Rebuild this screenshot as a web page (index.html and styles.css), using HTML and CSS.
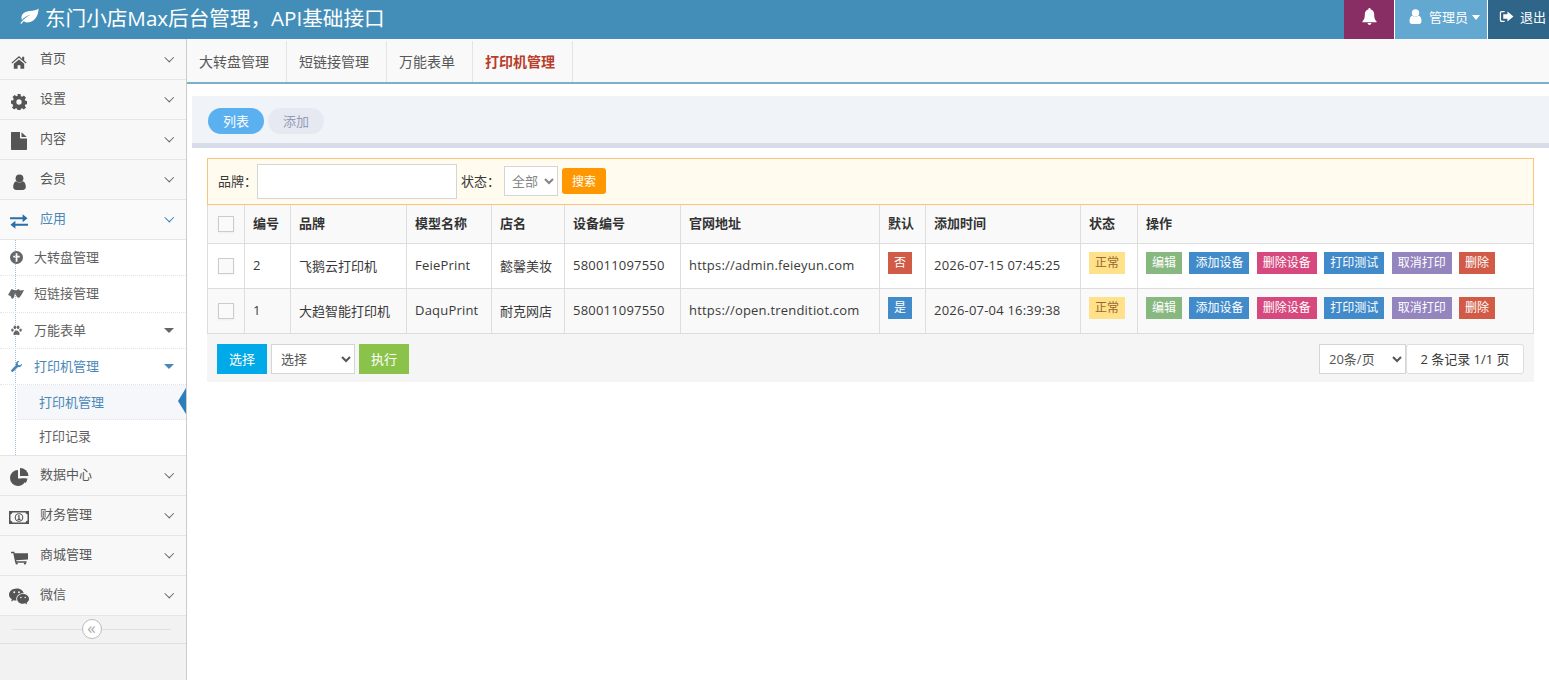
FILE: index.html
```html
<!DOCTYPE html>
<html>
<head>
    <meta charset="utf-8">
    <title>东门小店Max后台管理</title>
    <link rel="stylesheet" href="styles.css">
</head>

<body>
    <div class="navbar">
        <div class="brand">
            <svg class="brand-leaf" viewBox="0 0 24 20"><path d="M23.500 .5C21 3 17 3 13 3.500 7 4 3 7 3 11.500c0 1 .2 2 .6 2.800C6 11 9.500 9 14 8c-4 2-8 4.500-12 9.500-.6.800.6 1.700 1.300.9.700-.9 1.500-1.800 2.300-2.600 1.600 1 3.200 1.400 5 1.400C18 16.800 23.500 10 23.500 .5z"/></svg>
            <span>东门小店Max后台管理，API基础接口</span>
        </div>
        <div class="nav-right">
            <div class="nav-cell nav-bell">
                <svg class="nav-ico" viewBox="0 0 16 18"><path d="M8 0c-.7 0-1.200.5-1.200 1.200v.3C4.300 2 3 4 3 6.500 3 11 2 12.500.5 14v1h15v-1C14 12.500 13 11 13 6.500c0-2.500-1.300-4.500-3.800-5v-.3C9.200.5 8.700 0 8 0zM6 16c0 1.100.9 2 2 2s2-.9 2-2z"/></svg>
            </div>
            <div class="nav-cell nav-user">
                <svg class="nav-ico nav-ico-user" viewBox="0 0 14 17"><circle cx="7" cy="4.500" r="4.200"/><path d="M.2 14c0-4 1.500-6 3.300-6.300C4.500 8.600 5.700 9 7 9s2.500-.4 3.500-1.300C12.300 8 13.800 10 13.800 14c0 1.800-1.200 3-2.800 3H3c-1.600 0-2.800-1.200-2.800-3z"/></svg>
                <span>管理员</span>
                <i class="caret-white"></i>
            </div>
            <div class="nav-cell nav-exit">
                <svg class="nav-ico nav-ico-exit" viewBox="0 0 16 14"><path d="M6 1H3C1.500 1 .8 2 .8 3.200v7.600C.8 12 1.500 13 3 13h3v-1.400H3c-.5 0-.9-.4-.9-.9V3.300c0-.5.4-.9.9-.9h3z"/><path d="M9 1.500 15.500 7 9 12.500V9.500H4.500v-5H9z"/></svg>
                <span>退出</span>
            </div>
        </div>
    </div>

    <div class="layout">
        <div class="sidebar">
            <ul class="menu">
                <li class="menu-item">
                    <span class="menu-box"><svg class="menu-ico ico-home" viewBox="0 0 20 17"><path d="M10 1 .5 9.300l1 1.100L10 3.200l8.500 7.200 1-1.100-3-2.600V2h-2.600v2.600zM3.500 10.800V17h4.700v-4.500h3.600V17h4.700v-6.200L10 5.300z"/></svg></span>
                    <span class="menu-txt">首页</span><i class="chev"></i>
                </li>
                <li class="menu-item">
                    <span class="menu-box"><svg class="menu-ico ico-gear" viewBox="0 0 18 18"><path fill-rule="evenodd" d="M7.300 0h3.400l.4 2.500 1.400.6 2-1.400 2.400 2.400-1.400 2 .6 1.400 2.500.4v3.400l-2.500.4-.6 1.400 1.400 2-2.400 2.400-2-1.400-1.400.6-.4 2.500H7.300l-.4-2.500-1.400-.6-2 1.400-2.400-2.400 1.400-2-.6-1.400L0 10.700V7.300l2.500-.4.6-1.400-1.400-2 2.400-2.400 2 1.400 1.400-.6zM9 6a3 3 0 1 0 0 6 3 3 0 0 0 0-6z"/></svg></span>
                    <span class="menu-txt">设置</span><i class="chev"></i>
                </li>
                <li class="menu-item">
                    <span class="menu-box"><svg class="menu-ico ico-file" viewBox="0 0 16 18"><path d="M0 1c0-.6.4-1 1-1h8v5.500c0 .6.400 1 1 1h6V17c0 .6-.4 1-1 1H1c-.6 0-1-.4-1-1z"/><path d="M10.500.3 15.700 5H10.500z"/></svg></span>
                    <span class="menu-txt">内容</span><i class="chev"></i>
                </li>
                <li class="menu-item">
                    <span class="menu-box"><svg class="menu-ico ico-user" viewBox="0 0 14 17"><circle cx="7" cy="4.500" r="4.200"/><path d="M.2 14c0-4 1.500-6 3.300-6.300C4.500 8.600 5.700 9 7 9s2.500-.4 3.500-1.300C12.300 8 13.800 10 13.800 14c0 1.800-1.200 3-2.800 3H3c-1.600 0-2.800-1.200-2.800-3z"/></svg></span>
                    <span class="menu-txt">会员</span><i class="chev"></i>
                </li>
                <li class="menu-item is-open">
                    <span class="menu-box"><svg class="menu-ico ico-swap" viewBox="0 0 20 16"><path d="M0 3.400h14V0l5.500 4.400L14 8.800V5.600H0z"/><path d="M20 12.600H6V16L.5 11.600 6 7.200v3.200h14z"/></svg></span>
                    <span class="menu-txt">应用</span><i class="chev"></i>
                </li>
                <li class="sub-menu">
                    <ul>
                        <li class="sub-item">
                            <span class="sub-box"><svg class="sub-ico" viewBox="0 0 14 14"><path fill-rule="evenodd" d="M7 0a7 7 0 1 0 0 14A7 7 0 0 0 7 0zM6 2.500h2V5h2.500v2H8v4.500H6V7H3.500V5H6z"/></svg></span>
                            <span class="sub-txt">大转盘管理</span>
                        </li>
                        <li class="sub-item">
                            <span class="sub-box"><svg class="sub-ico sub-ico-wide" viewBox="0 0 16 12"><path d="M3.500 1 6 2 8 2.500 10.500 1l1.500 1.500 4-.5-1.500 3-1.500 2.500-2 2.500-2-1L7 5 6 9.500 4 11 2.500 8 0 7z"/></svg></span>
                            <span class="sub-txt">短链接管理</span>
                        </li>
                        <li class="sub-item">
                            <span class="sub-box"><svg class="sub-ico sub-ico-sm" viewBox="0 0 14 13"><ellipse cx="1.800" cy="6" rx="1.600" ry="2"/><ellipse cx="5" cy="2.500" rx="1.700" ry="2.300"/><ellipse cx="9" cy="2.500" rx="1.700" ry="2.300"/><ellipse cx="12.200" cy="6" rx="1.600" ry="2"/><path d="M7 6.500c-2 0-4 2.500-4 4.500 0 1.500 1.500 1.500 2.200 1.300.6-.2 1.200-.4 1.800-.4s1.200.2 1.800.4c.7.200 2.200.2 2.200-1.300 0-2-2-4.500-4-4.500z"/></svg></span>
                            <span class="sub-txt">万能表单</span><i class="tri"></i>
                        </li>
                        <li class="sub-item is-open">
                            <span class="sub-box"><svg class="sub-ico sub-ico-sm" viewBox="0 0 14 14"><path d="M13.800 3.300c.3 1.500-.2 3-1.300 3.800-1 .8-2.300 1-3.500.6L3 13.500c-.7.700-1.700.7-2.400 0-.7-.7-.7-1.700 0-2.400L6.300 5c-.4-1.200-.2-2.500.6-3.500C7.700.4 9.200-.1 10.700.2L8.500 2.400l.5 2.600 2.600.5z"/></svg></span>
                            <span class="sub-txt">打印机管理</span><i class="tri"></i>
                        </li>
                        <li class="leaf is-active">打印机管理</li>
                        <li class="leaf">打印记录</li>
                    </ul>
                </li>
                <li class="menu-item">
                    <span class="menu-box"><svg class="menu-ico ico-pie" viewBox="0 0 19 18"><path d="M8 2a8 8 0 1 0 8 8.500H8z"/><path d="M10 0v8h8.500A8.500 8.500 0 0 0 10 0z"/><path d="M11 10.500h6.500a8 8 0 0 1-2.200 4.700z"/></svg></span>
                    <span class="menu-txt">数据中心</span><i class="chev"></i>
                </li>
                <li class="menu-item">
                    <span class="menu-box"><svg class="menu-ico ico-money" viewBox="0 0 20 13"><path d="M0 0h20v13H0z"/><path class="money-hole" d="M1.500 3.500A2.500 2.500 0 0 0 3.500 1.500h13a2.500 2.500 0 0 0 2 2v6a2.500 2.500 0 0 0-2 2h-13a2.500 2.500 0 0 0-2-2z"/><circle cx="10" cy="6.500" r="4.300"/><circle class="money-hole" cx="10" cy="6.500" r="3.200"/><path d="M9.300 4.300h1.300v3.500h.9V9H8.500V7.800h.9V5.500h-.9z"/></svg></span>
                    <span class="menu-txt">财务管理</span><i class="chev"></i>
                </li>
                <li class="menu-item">
                    <span class="menu-box"><svg class="menu-ico ico-cart" viewBox="0 0 18 14"><path d="M0 .5h3.500l.5 1.500H18v6.500L5.500 9.500l.3 1H16.500V12H4.500L2.400 2H0z"/><circle cx="6" cy="12.800" r="1.200"/><circle cx="14.800" cy="12.800" r="1.200"/></svg></span>
                    <span class="menu-txt">商城管理</span><i class="chev"></i>
                </li>
                <li class="menu-item">
                    <span class="menu-box"><svg class="menu-ico ico-chat" viewBox="0 0 21 17"><path d="M8 0C3.600 0 0 2.900 0 6.500 0 8.600 1.100 10.300 3 11.500l-.8 2.300 2.700-1.400c1 .3 2 .5 3 .4-.2-.6-.3-1.200-.3-1.800C7.600 7.500 10.800 5 14.800 5h.7C14.700 2.100 11.700 0 8 0z"/><path d="M14.700 6C11.300 6 8.500 8.200 8.500 11s2.800 5 6.200 5c.8 0 1.500-.1 2.200-.3l2.200 1.200-.6-1.900c1.500-1 2.500-2.400 2.500-4 0-2.800-2.900-5-6.300-5z"/><circle class="money-hole" cx="5.500" cy="4" r="1"/><circle class="money-hole" cx="10.500" cy="4" r="1"/><circle class="money-hole" cx="12.500" cy="9.500" r=".8"/><circle class="money-hole" cx="17" cy="9.500" r=".8"/></svg></span>
                    <span class="menu-txt">微信</span><i class="chev"></i>
                </li>
            </ul>
            <div class="collapse-bar">
                <span class="collapse-btn">«</span>
            </div>
        </div>

        <div class="main">
            <div class="tabs">
                <a class="tab">大转盘管理</a>
                <a class="tab">短链接管理</a>
                <a class="tab">万能表单</a>
                <a class="tab tab-on">打印机管理</a>
            </div>

            <div class="page-head">
                <a class="pill pill-on">列表</a>
                <a class="pill">添加</a>
            </div>

            <div class="panel">
                <div class="search-box">
                    <label>品牌：</label>
                    <input class="txt" type="text">
                    <label class="lbl-state">状态：</label>
                    <select class="sel-state"><option>全部</option></select>
                    <button class="btn-search">搜索</button>
                </div>

                <table class="grid">
                    <colgroup>
                        <col class="c1"><col class="c2"><col class="c3"><col class="c4"><col class="c5"><col class="c6"><col class="c7"><col class="c8"><col class="c9"><col class="c10"><col>
                    </colgroup>
                    <thead>
                        <tr>
                            <th><span class="check"></span></th>
                            <th>编号</th>
                            <th>品牌</th>
                            <th>模型名称</th>
                            <th>店名</th>
                            <th>设备编号</th>
                            <th>官网地址</th>
                            <th>默认</th>
                            <th>添加时间</th>
                            <th>状态</th>
                            <th>操作</th>
                        </tr>
                    </thead>
                    <tbody>
                        <tr>
                            <td><span class="check"></span></td>
                            <td class="latin">2</td>
                            <td>飞鹅云打印机</td>
                            <td class="latin">FeiePrint</td>
                            <td>懿馨美妆</td>
                            <td class="latin">580011097550</td>
                            <td class="latin">https://admin.feieyun.com</td>
                            <td><span class="tag red">否</span></td>
                            <td class="latin">2026-07-15 07:45:25</td>
                            <td><span class="tag warn">正常</span></td>
                            <td class="ops">
                                <a class="tag green">编辑</a>
                                <a class="tag blue">添加设备</a>
                                <a class="tag pink">删除设备</a>
                                <a class="tag blue">打印测试</a>
                                <a class="tag purple">取消打印</a>
                                <a class="tag red">删除</a>
                            </td>
                        </tr>
                        <tr>
                            <td><span class="check"></span></td>
                            <td class="latin">1</td>
                            <td>大趋智能打印机</td>
                            <td class="latin">DaquPrint</td>
                            <td>耐克网店</td>
                            <td class="latin">580011097550</td>
                            <td class="latin">https://open.trenditiot.com</td>
                            <td><span class="tag blue">是</span></td>
                            <td class="latin">2026-07-04 16:39:38</td>
                            <td><span class="tag warn">正常</span></td>
                            <td class="ops">
                                <a class="tag green">编辑</a>
                                <a class="tag blue">添加设备</a>
                                <a class="tag pink">删除设备</a>
                                <a class="tag blue">打印测试</a>
                                <a class="tag purple">取消打印</a>
                                <a class="tag red">删除</a>
                            </td>
                        </tr>
                    </tbody>
                </table>

                <div class="table-foot">
                    <button class="btn-pick">选择</button>
                    <select class="sel-action"><option>选择</option></select>
                    <button class="btn-run">执行</button>
                    <div class="pager">
                        <select class="sel-size"><option>20条/页</option></select>
                        <span class="page-info">2 条记录 1/1 页</span>
                    </div>
                </div>
            </div>
        </div>
    </div>
</body>
</html>
```

FILE: styles.css
```css
* {
    box-sizing: border-box;
}

html, body {
    height: 100%;
}

body {
    margin: 0;
    font-size: 13px;
    color: #393939;
    background-color: #fff;
    overflow: hidden;
    font-family: "Open Sans", "Noto Sans CJK SC", sans-serif;
}

ul {
    margin: 0;
    padding: 0;
    list-style: none;
}

/* top bar */
.navbar {
    display: flex;
    justify-content: space-between;
    height: 39px;
    background-color: #438eb9;
    color: #fff;
}

.brand {
    display: flex;
    align-items: center;
    padding: 0 0 6px 19px;
    font-size: 20.6px;
}

.brand-leaf {
    width: 20px;
    height: 17px;
    margin-right: 6px;
    fill: #fff;
}

.nav-right {
    display: flex;
}

.nav-cell {
    display: flex;
    align-items: center;
    padding-bottom: 6px;
    border-left: 1px solid #fff;
}

.nav-ico {
    fill: #fff;
}

.nav-bell {
    width: 50px;
    justify-content: center;
    background-color: #892e65;
    border-left: none;
}

.nav-bell .nav-ico {
    width: 15px;
    height: 17px;
}

.nav-user {
    width: 93px;
    padding-left: 14px;
    background-color: #62a8d1;
}

.nav-ico-user {
    width: 13px;
    height: 15px;
    margin-right: 7px;
}

.caret-white {
    margin-left: 4px;
    margin-top: 2px;
    border-top: 5px solid #fff;
    border-left: 4px solid transparent;
    border-right: 4px solid transparent;
}

.nav-exit {
    width: 62px;
    padding-left: 11px;
    background-color: #2e6589;
    white-space: nowrap;
}

.nav-ico-exit {
    width: 15px;
    height: 13px;
    margin-right: 6px;
}

.layout {
    display: flex;
    height: 641px;
}

/* side menu */
.sidebar {
    flex: none;
    width: 187px;
    padding-top: 1px;
    background-color: #f2f2f2;
    border-right: 1px solid #ccc;
}

.menu-item {
    display: flex;
    align-items: center;
    height: 40px;
    color: #585858;
    background-color: #f8f8f8;
    border-bottom: 1px solid #e5e5e5;
}

.menu-box {
    display: flex;
    flex: none;
    justify-content: center;
    width: 20px;
    margin: 4px 11px 0 9px;
}

.menu-txt {
    margin-bottom: 4px;
}

.menu-ico {
    fill: #555;
}

.ico-home { width: 16px; height: 14px; }
.ico-gear { width: 16px; height: 16px; }
.ico-file { width: 16px; height: 18px; margin-top: -1px; }
.ico-user { width: 13px; height: 16px; }
.ico-swap { width: 18px; height: 15px; }
.ico-pie { width: 19px; height: 18px; margin-top: -2px; }
.ico-money { width: 20px; height: 13px; }
.ico-cart { width: 17px; height: 14px; }
.ico-chat { width: 20px; height: 17px; margin-top: -2px; }

.money-hole {
    fill: #f8f8f8;
}

.chev {
    width: 6.5px;
    height: 6.5px;
    margin-left: auto;
    margin-right: 14px;
    margin-bottom: 5px;
    border-right: 1.5px solid #666;
    border-bottom: 1.5px solid #666;
    transform: rotate(45deg);
}

.menu-item.is-open {
    color: #4b88b7;
    background-color: #fafafa;
}

.menu-item.is-open .menu-ico {
    fill: #2b6ea8;
}

.menu-item.is-open .chev {
    border-color: #2b7dbc;
}

.sub-menu {
    position: relative;
    background-color: #fff;
    border-bottom: 1px solid #e5e5e5;
}

.sub-menu::before {
    content: "";
    position: absolute;
    top: 0;
    bottom: 0;
    left: 15px;
    border-left: 1px dotted #9dbdd6;
}

.sub-item {
    position: relative;
    display: flex;
    align-items: center;
    height: 36.25px;
    color: #616161;
    border-bottom: 1px dotted #e4e4e4;
}

.sub-box {
    display: flex;
    flex: none;
    justify-content: center;
    width: 16px;
    margin: 0 10px 0 8px;
}

.sub-txt {
    margin-bottom: 2px;
}

.sub-ico {
    width: 13px;
    height: 13px;
    fill: #666;
}

.sub-ico-wide {
    width: 16px;
    height: 12px;
}

.sub-ico-sm {
    width: 11px;
    height: 11px;
}

.tri {
    margin-left: auto;
    margin-right: 12px;
    border-top: 5px solid #666;
    border-left: 5px solid transparent;
    border-right: 5px solid transparent;
}

.sub-item.is-open {
    color: #4b88b7;
}

.sub-item.is-open .sub-ico {
    fill: #4b88b7;
}

.sub-item.is-open .tri {
    border-top-color: #4b88b7;
}

.leaf {
    position: relative;
    height: 35px;
    line-height: 34px;
    padding-left: 39px;
    color: #616161;
    border-bottom: 1px dotted #e4e4e4;
}

.leaf:last-child {
    line-height: 32px;
    border-bottom: none;
}

.leaf.is-active {
    margin-left: 17px;
    padding-left: 22px;
    color: #4b88b7;
    background-color: #f5f7fa;
}

.leaf.is-active::after {
    content: "";
    position: absolute;
    right: 0;
    top: 3px;
    border-top: 13px solid transparent;
    border-bottom: 13px solid transparent;
    border-right: 8px solid #2b7dbc;
}

.collapse-bar {
    position: relative;
    display: flex;
    justify-content: center;
    align-items: center;
    height: 28px;
    padding-bottom: 1px;
    border-bottom: 1px solid #e0e0e0;
}

.collapse-bar::before {
    content: "";
    position: absolute;
    left: 12px;
    right: 15px;
    top: 13px;
    border-top: 1px solid #e0e0e0;
}

.collapse-btn {
    position: relative;
    display: block;
    width: 20px;
    height: 20px;
    line-height: 15px;
    margin-right: 3px;
    font-size: 17px;
    text-align: center;
    color: #aaa;
    background-color: #fff;
    border: 1px solid #bbb;
    border-radius: 50%;
}

/* main column */
.main {
    flex: 1;
    min-width: 0;
}

.tabs {
    display: flex;
    height: 45px;
    padding-top: 2px;
    background-color: #f9f9f9;
    border-bottom: 2px solid #7ab0ce;
}

.tab {
    width: 100px;
    padding-left: 12px;
    font-size: 14px;
    line-height: 41px;
    color: #585858;
    border-right: 1px solid #e4e4e4;
}

.tab:nth-child(3) {
    width: 86px;
}

.tab-on {
    font-weight: bold;
    color: #b83d2b;
    background-color: #f9f9f9;
}

.page-head {
    display: flex;
    gap: 4px;
    height: 52px;
    margin: 12px 0 10px 5px;
    padding: 12px 16px 0;
    background-color: #f0f3f7;
    border-bottom: 5px solid #d8dbe8;
}

.pill {
    width: 56px;
    height: 26px;
    line-height: 26px;
    text-align: center;
    color: #959cb5;
    background-color: #e6e9f2;
    border-radius: 13px;
}

.pill-on {
    color: #fff;
    background-color: #5bb0f0;
}

.panel {
    margin: 0 15px 0 20px;
}

.search-box {
    display: flex;
    align-items: center;
    height: 47px;
    padding-left: 10px;
    background-color: #fffbee;
    border: 1px solid #fcc37c;
}

.search-box label {
    margin-bottom: 3px;
}

.txt {
    width: 200px;
    height: 35px;
    background-color: #fff;
    border: 1px solid #d5d5d5;
}

.search-box .lbl-state {
    margin-left: 4px;
}

.sel-state {
    width: 54px;
    height: 30px;
    margin: 0 0 1px 4px;
    padding-left: 3px;
    font-family: inherit;
    font-size: 13px;
    color: #858585;
    background-color: #fff;
    border: 1px solid #d5d5d5;
    border-radius: 0;
}

.btn-search {
    width: 44px;
    height: 26px;
    margin: 0 0 1px 4px;
    padding: 0;
    font-family: inherit;
    font-size: 12px;
    color: #fff;
    background-color: #ff9800;
    border: none;
    border-radius: 3px;
}

/* list */
.grid {
    width: 100%;
    border-collapse: collapse;
    table-layout: fixed;
}

.grid th, .grid td {
    padding: 0 8px;
    text-align: left;
    white-space: nowrap;
    border: 1px solid #ddd;
}

.grid th {
    height: 38px;
    padding-bottom: 2px;
    font-weight: bold;
    color: #333;
    background-color: #f9f9f9;
    border-top: none;
}

.grid td {
    height: 45px;
    vertical-align: top;
    padding-top: 12px;
    color: #393939;
}

.grid .latin {
    letter-spacing: .2px;
}

.grid tbody tr:nth-child(2) td {
    background-color: #f9f9f9;
}

.c1 { width: 37px; }
.c2 { width: 46px; }
.c3 { width: 116px; }
.c4 { width: 85px; }
.c5 { width: 73px; }
.c6 { width: 116px; }
.c7 { width: 199px; }
.c8 { width: 46px; }
.c9 { width: 155px; }
.c10 { width: 57px; }

.check {
    display: block;
    width: 16px;
    height: 16px;
    margin-left: 2px;
    background-color: #fafafa;
    border: 1px solid #ccc;
    box-shadow: 0 1px 2px rgba(0, 0, 0, .05);
}

.grid th .check {
    margin-top: 2px;
}

.grid td .check {
    margin-top: 2px;
}

.tag {
    display: inline-block;
    height: 22px;
    line-height: 22px;
    padding: 0 6px;
    font-size: 12px;
    color: #fff;
    vertical-align: top;
    margin-top: -4px;
}

.red { background-color: #d15b47; }
.blue { background-color: #428bca; }
.green { background-color: #87b87f; }
.pink { background-color: #d6487e; }
.purple { background-color: #9585bf; }

.tag.warn {
    color: #996633;
    background-color: #fee188;
}

.ops .tag {
    margin-right: 4px;
}

.table-foot {
    display: flex;
    align-items: flex-start;
    height: 48px;
    padding: 10px 10px 0;
    background-color: #f5f5f5;
}

.btn-pick, .btn-run {
    width: 50px;
    height: 30px;
    padding: 0;
    font-family: inherit;
    font-size: 13px;
    color: #fff;
    border: none;
}

.btn-pick {
    background-color: #00a9e8;
}

.btn-run {
    background-color: #8bc34a;
}

.sel-action {
    width: 84px;
    height: 30px;
    margin: 0 4px;
    padding-left: 5px;
    font-family: inherit;
    font-size: 13px;
    color: #555;
    background-color: #fff;
    border: 1px solid #d5d5d5;
    border-radius: 0;
}

.pager {
    display: flex;
    margin-left: auto;
}

.sel-size {
    width: 87px;
    height: 30px;
    padding-left: 5px;
    font-family: inherit;
    font-size: 13px;
    color: #555;
    background-color: #fff;
    border: 1px solid #d5d5d5;
    border-radius: 0;
}

.page-info {
    width: 118px;
    height: 30px;
    line-height: 28px;
    text-align: center;
    background-color: #fff;
    border: 1px solid #ddd;
    border-radius: 3px;
}
```
